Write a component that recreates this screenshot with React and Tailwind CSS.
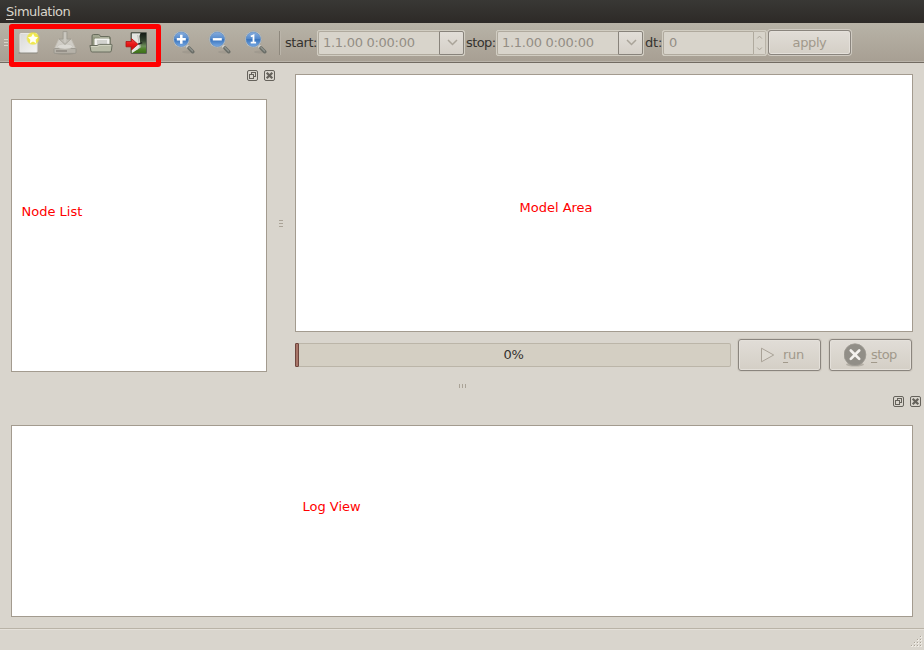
import React from "react";

function NewIcon() {
  return (
    <svg width="24" height="24" viewBox="0 0 24 24" className="block shrink-0">
      <defs>
        <linearGradient id="paper" x1="0" y1="0" x2="1" y2="1">
          <stop offset="0" stopColor="#d9d9d7" />
          <stop offset="1" stopColor="#f4f4f3" />
        </linearGradient>
        <radialGradient id="glow">
          <stop offset="0" stopColor="#fffde0" />
          <stop offset=".45" stopColor="#f4ee50" />
          <stop offset=".75" stopColor="#eee52c" stopOpacity=".8" />
          <stop offset="1" stopColor="#eee52c" stopOpacity="0" />
        </radialGradient>
      </defs>
      <rect x="1.5" y="21" width="19" height="1.8" rx=".9" fill="#827e75" opacity=".5" />
      <rect x="3" y="2.5" width="17" height="19" rx=".8" fill="url(#paper)" stroke="#e9e8e5" />
      <path d="M2.500 21.700h18" stroke="#9b9992" strokeWidth=".7" />
      <circle cx="16" cy="7.500" r="7" fill="url(#glow)" />
      <path d="M16 2.500l1.600 3.200 3.500.5-2.500 2.500.6 3.500-3.200-1.700-3.200 1.700.6-3.500-2.500-2.500 3.500-.5z" fill="#fffff6" />
    </svg>
  );
}

function SaveIcon() {
  return (
    <svg width="24" height="24" viewBox="0 0 24 24" className="block shrink-0">
      <ellipse cx="12" cy="22" rx="11" ry="1.700" fill="#827e75" opacity=".35" />
      <path d="M5.700 8.500h12.600l4.400 9.500H1.300z" fill="#d0cdc6" stroke="#c3bfb6" strokeWidth=".8" />
      <path d="M1 18.300q0-.8.8-.8h20.400q.8 0 .8.8v2.900q0 1.200-1.200 1.200H2.200Q1 22.400 1 21.200z" fill="#b5b1a8" stroke="#969289" strokeWidth=".8" />
      <ellipse cx="12" cy="15.500" rx="7.500" ry="2.500" fill="#dbd9d3" stroke="#c5c1b8" strokeWidth=".6" />
      <path d="M3 20h11" stroke="#88847b" strokeWidth="1.400" />
      <path d="M10 .500h4v7.500h3.800L12 13.500 6.200 8H10z" fill="#c0bdb5" stroke="#9d998f" strokeWidth=".8" />
      <path d="M12 1.500v10" stroke="#cfccc5" strokeWidth="1.300" />
    </svg>
  );
}

function OpenIcon() {
  return (
    <svg width="24" height="24" viewBox="0 0 24 24" className="block shrink-0">
      <path d="M3 19V5q0-1.500 1.500-1.500h5q1 0 1.300.8l.4 1.200h8.500q1.500 0 1.500 1.500v12z" fill="#949982" stroke="#696d5e" />
      <path d="M4 5h6l1 1.500h9" fill="none" stroke="#b5b9a5" strokeWidth=".8" />
      <path d="M6 8h14v8H6z" fill="#efefec" stroke="#fafaf8" strokeWidth=".9" />
      <path d="M8 10h10M8 12h10M8 13.800h6" stroke="#aeb0aa" strokeWidth=".9" />
      <path d="M.900 14.500h7.300q.7 0 1.200-.6.400-.5 1.200-.5h11.700q.900 0 .8.800l-.8 5.700q-.2 1.100-1.300 1.100H3.200q-1.100 0-1.300-1.100z" fill="#b8bba7" stroke="#696d5e" />
      <path d="M2 15.500h6.800l1.500-1.100h11.500" fill="none" stroke="#d9dbc9" strokeWidth=".8" />
    </svg>
  );
}

function ExitIcon() {
  return (
    <svg width="24" height="24" viewBox="0 0 24 24" className="block shrink-0">
      <defs>
        <linearGradient id="outside" x1="0" y1="0" x2="0" y2="1">
          <stop offset="0" stopColor="#141a14" />
          <stop offset=".4" stopColor="#33442f" />
          <stop offset=".65" stopColor="#6d8f5a" />
          <stop offset=".8" stopColor="#4d8226" />
          <stop offset="1" stopColor="#3c6e18" />
        </linearGradient>
        <linearGradient id="arrow" x1="0" y1="0" x2="0" y2="1">
          <stop offset="0" stopColor="#f04a4a" />
          <stop offset=".5" stopColor="#ea1515" />
          <stop offset="1" stopColor="#c40a0a" />
        </linearGradient>
      </defs>
      <rect x="6" y="1.500" width="15.500" height="21" rx=".5" fill="url(#outside)" stroke="#5a5f54" />
      <path d="M6.800 2.200h8.700q-1.300 2.300-.8 4.800l.8 9.500-8.700 5.700z" fill="#e4e5e1" />
      <path d="M12.700 4l2 12-2.200 2.500" fill="none" stroke="#bcbdb8" strokeWidth="1" />
      <path d="M13.200 13.200l4-1.600" stroke="#202420" strokeWidth="1.500" />
      <path d="M1 10.500h5.500V7.600L13 13.300 6.500 19v-3.200H1z" fill="url(#arrow)" stroke="#b01212" strokeWidth=".8" />
    </svg>
  );
}

function ZoomIcon({ kind }) {
  return (
    <svg width="24" height="24" viewBox="0 0 24 24" className="block shrink-0">
      <defs>
        <linearGradient id={"lens" + kind} x1="0" y1="0" x2="0" y2="1">
          <stop offset="0" stopColor="#87addd" />
          <stop offset=".48" stopColor="#5388cb" />
          <stop offset=".52" stopColor="#3974bd" />
          <stop offset="1" stopColor="#78a9e3" />
        </linearGradient>
      </defs>
      <ellipse cx="17" cy="22" rx="6" ry="1.500" fill="#817d72" opacity=".25" />
      <path d="M15.500 15.500l2.500 2.500" stroke="#d5d5d1" strokeWidth="3" />
      <path d="M18 18l3.700 3.700" stroke="#6b6e68" strokeWidth="3.600" strokeLinecap="round" />
      <path d="M18 17.500l3.500 3.500" stroke="#91948e" strokeWidth="1.200" strokeLinecap="round" />
      <circle cx="10.300" cy="9.300" r="8.400" fill="#d3d5d2" stroke="#a0a19b" strokeWidth=".7" />
      <circle cx="10.300" cy="9.300" r="7.300" fill={"url(#lens" + kind + ")"} stroke="#5d89bf" strokeWidth=".7" />
      {kind === "in" && <path d="M5.800 9.300h9M10.300 4.800v9" stroke="#fff" strokeWidth="2.500" />}
      {kind === "out" && <path d="M5.800 9.300h9" stroke="#fff" strokeWidth="2.400" />}
      {kind === "one" && <path d="M7.800 6.500l2.700-1.200v7.200M7.700 12.700h5.400" fill="none" stroke="#fff" strokeWidth="1.800" />}
    </svg>
  );
}

function DockButtons() {
  return (
    <div className="flex gap-[6px]">
      <svg width="11" height="11" className="block" fill="none" stroke="#65625b" shapeRendering="crispEdges">
        <rect x=".5" y=".5" width="10" height="10" rx="1.5" shapeRendering="auto" />
        <path d="M4.500 4.500v-2h4v4h-2M2.500 4.500h4v4h-4z" />
      </svg>
      <svg width="11" height="11" className="block" fill="none" stroke="#65625b">
        <rect x=".5" y=".5" width="10" height="10" rx="1.5" />
        <path d="M2.700 2.700l5.600 5.600M8.300 2.700L2.700 8.300" strokeWidth="2.200" />
      </svg>
    </div>
  );
}

function DateCombo() {
  return (
    <div className="flex h-[26px] w-[148px] shrink-0 rounded-[2px] border border-[#d1cdc2] bg-[#d8d4cb]">
      <div className="flex h-full w-[122px] items-center rounded-l-[2px] border border-r-0 border-[#b0aa9e] pl-[4px] tracking-[-0.28px] text-[#938e85]">
        1.1.00 0:00:00
      </div>
      <div className="flex h-full w-[25px] items-center justify-center rounded-r-[2px] border border-[#88837b] bg-linear-to-b from-[#e2ded8] to-[#d5d0c8]">
        <svg width="11" height="7" className="ml-[2px] block" fill="none" stroke="#aaa499" strokeWidth="1.5">
          <path d="M1 1l4.500 4.500L10 1" />
        </svg>
      </div>
    </div>
  );
}

const pushButton =
  "flex shrink-0 items-center rounded-[3px] border border-[#8a857e] bg-linear-to-b from-[#e1ddd7] to-[#d4cfc6] text-[#a1998b] shadow-[0_0_0_1px_#d0cbc2,inset_0_0_0_1px_#e4e0da]";

const panel = "border border-[#a39b8f] bg-white text-[#ff0000]";

export default function App() {
  return (
    <div className="relative flex h-[650px] w-[924px] flex-col overflow-hidden bg-[#d9d5cd] font-['DejaVu_Sans',sans-serif] text-[13px] leading-[16px] text-[#34322f]">
      <header className="flex h-[23px] shrink-0 items-center bg-linear-to-b from-[#393835] to-[#2d2a27] pl-[6px] tracking-[-0.5px] text-[#d9d5cb]">
        <span><span className="underline underline-offset-[3px] decoration-1">S</span>imulation</span>
      </header>

      <div className="flex h-[40px] shrink-0 items-center border-b border-[#716a61] bg-linear-to-b from-[#b8b3a7] to-[#a79f93] shadow-[inset_0_-1px_0_#b9b3a9]">
        <div className="ml-[4px] flex w-[13px] shrink-0 flex-col gap-[2px]">
          <i className="h-px w-[4px] bg-[#d8d3c9]" />
          <i className="h-px w-[4px] bg-[#d8d3c9]" />
          <i className="h-px w-[4px] bg-[#d8d3c9]" />
        </div>
        <div className="flex gap-[12px]">
          <NewIcon />
          <SaveIcon />
          <OpenIcon />
          <ExitIcon />
        </div>
        <div className="mb-px ml-[22px] flex gap-[12px]">
          <ZoomIcon kind="in" />
          <ZoomIcon kind="out" />
          <ZoomIcon kind="one" />
        </div>
        <div className="ml-[12px] h-[24px] w-[2px] shrink-0 border-r border-[#bbb5aa] bg-[#8e887d]" />
        <div className="w-[36px] shrink-0 pl-[4px] tracking-[-0.45px] whitespace-nowrap">start:</div>
        <DateCombo />
        <div className="w-[31px] shrink-0 pl-px tracking-[-0.6px] whitespace-nowrap">stop:</div>
        <DateCombo />
        <div className="w-[18px] shrink-0 pl-px tracking-[-0.2px] whitespace-nowrap">dt:</div>
        <div className="flex h-[26px] w-[105px] shrink-0 rounded-[2px] border border-[#d1cdc2] bg-[#d8d4cb]">
          <div className="flex h-full w-[91px] items-center rounded-l-[2px] border border-[#b0aa9e] pl-[5px] text-[#938e85]">0</div>
          <div className="flex h-full w-[12px] flex-col items-center justify-between rounded-r-[2px] border border-l-0 border-[#b9b3a8] py-[3px]">
            <svg width="7" height="4" className="block shrink-0" fill="none" stroke="#aaa499"><path d="M1.200 3.500l2.300-2.400 2.300 2.400" /></svg>
            <svg width="7" height="4" className="block shrink-0" fill="none" stroke="#aaa499"><path d="M1.200.5l2.300 2.400L5.800.5" /></svg>
          </div>
        </div>
        <div className={pushButton + " ml-px h-[25px] w-[83px] justify-center tracking-[-0.4px]"}>apply</div>
      </div>

      <main className="flex h-[321px] shrink-0">
        <section className="w-[275px] shrink-0">
          <div className="flex h-[36px] justify-end pt-[7px]"><DockButtons /></div>
          <div className={panel + " ml-[11px] h-[273px] w-[256px] pt-[104px] pl-[9.5px]"}>Node List</div>
        </section>
        <div className="flex w-[20px] shrink-0 flex-col gap-[2px] pt-[157px] pl-[4px]">
          <i className="h-px w-[4px] bg-[#aaa397]" />
          <i className="h-px w-[4px] bg-[#aaa397]" />
          <i className="h-px w-[4px] bg-[#aaa397]" />
        </div>
        <section className="flex w-[618px] flex-col pt-[11px]">
          <div className={panel + " h-[258px] shrink-0 pt-[125px] pl-[223.5px]"}>Model Area</div>
          <div className="mt-[7px] flex items-center">
            <div className="flex h-[24px] w-[436px] shrink-0 items-center rounded-[2px] border border-l-0 border-[#bbb5a8] bg-[#d4cfc3]">
              <div className="h-[24px] w-[4px] shrink-0 rounded-[1px] border border-[#70473f] bg-[#a87568]" />
              <div className="flex-1 pr-[2px] text-center tracking-[-0.3px]">0%</div>
            </div>
            <div className={pushButton + " ml-[7px] h-[32px] w-[83px] pl-[21px]"}>
              <svg width="15" height="16" className="block shrink-0" fill="#dedad2" stroke="#a9a297">
                <path d="M1.500 1.200L13.700 8 1.500 14.800z" />
              </svg>
              <span className="ml-[8px] tracking-[-0.3px]"><span className="underline underline-offset-[3px] decoration-1">r</span>un</span>
            </div>
            <div className={pushButton + " ml-[8px] h-[32px] w-[83px] pl-[14px]"}>
              <svg width="23" height="24" viewBox="0 0 23 24" className="block shrink-0">
                <ellipse cx="11" cy="21.500" rx="9" ry="2" fill="#b4afa6" />
                <circle cx="11" cy="11.700" r="10.900" fill="#918e87" stroke="#a09c94" strokeWidth=".8" />
                <path d="M6.800 7.500l8.400 8.400M15.200 7.500l-8.400 8.400" stroke="#f4f2ef" strokeWidth="2.700" strokeLinecap="round" />
              </svg>
              <span className="ml-[4px] tracking-[-0.6px]"><span className="underline underline-offset-[3px] decoration-1">s</span>top</span>
            </div>
          </div>
        </section>
      </main>

      <div className="flex h-[12px] shrink-0 gap-[2px] pl-[459px]">
        <i className="h-[4px] w-px bg-[#aaa397]" />
        <i className="h-[4px] w-px bg-[#aaa397]" />
        <i className="h-[4px] w-px bg-[#aaa397]" />
      </div>

      <section className="h-[232px] shrink-0">
        <div className="flex h-[29px] justify-end pr-[3px]"><DockButtons /></div>
        <div className={panel + " ml-[11px] h-[192px] w-[902px] pt-[73px] pl-[290.5px]"}>Log View</div>
      </section>

      <footer className="flex flex-1 items-end justify-end border-t border-[#b9b3a7] pr-[2px] pb-[3px] shadow-[inset_0_1px_0_#e5e1da]">
        <svg width="11" height="11" className="block" shapeRendering="crispEdges">
          {[[9, 0], [6, 3], [9, 3], [3, 6], [6, 6], [9, 6], [0, 9], [3, 9], [6, 9], [9, 9]].map(([x, y]) => (
            <g key={x + "-" + y}>
              <rect x={x} y={y} width="2" height="2" fill="#eeeae3" />
              <rect x={x} y={y} width="1" height="1" fill="#aaa397" />
            </g>
          ))}
        </svg>
      </footer>

      <div className="pointer-events-none absolute top-[24px] left-[9px] h-[43px] w-[152px] rounded-[3px] border-[5px] border-[#ff0000]" />
    </div>
  );
}
